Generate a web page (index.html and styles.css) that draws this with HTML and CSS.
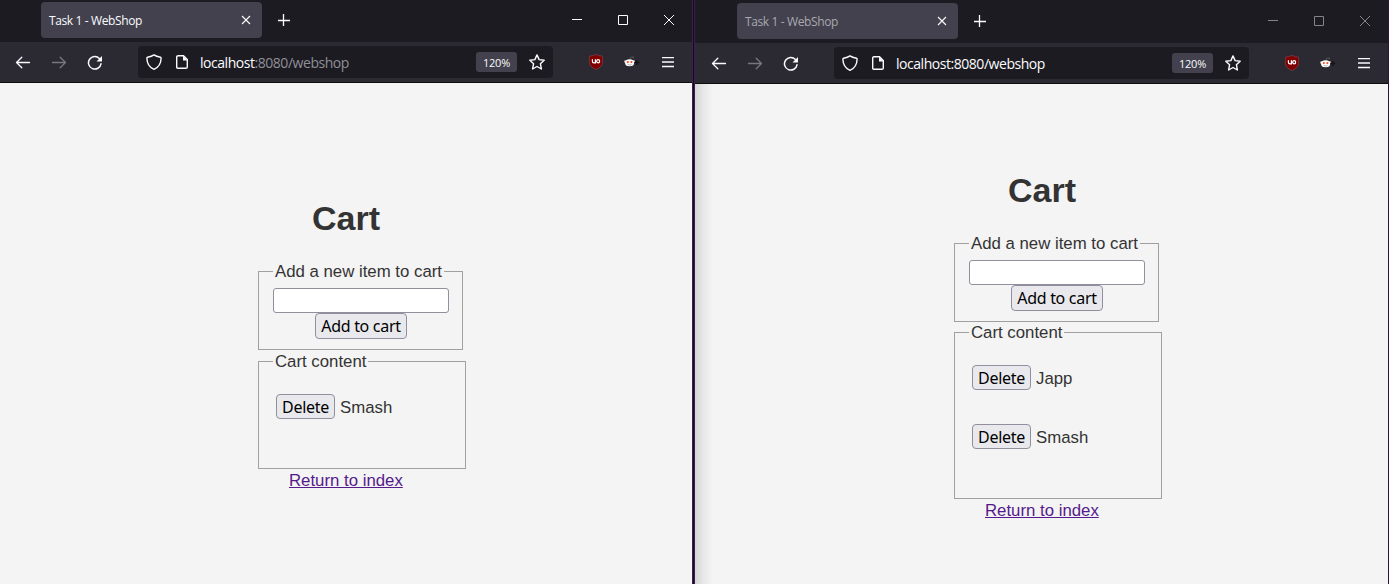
FILE: index.html
```html
<!DOCTYPE html>
<html lang="en">
<head>
<meta charset="utf-8">
<title>Task 1 - WebShop</title>
<link rel="stylesheet" href="styles.css">
</head>
<body>
<svg width="0" height="0" class="defs">
  <defs>
    <symbol id="close" viewBox="0 0 10 10"><path d="M1 1l8 8M9 1l-8 8" fill="none" stroke="currentColor" stroke-width="1.1"/></symbol>
    <symbol id="plus" viewBox="0 0 12 12"><path d="M5.500 0v12M0 6.500h12" fill="none" stroke="currentColor" stroke-width="1.300"/></symbol>
    <symbol id="min" viewBox="0 0 10 10"><path d="M0 4.5h10" stroke="currentColor"/></symbol>
    <symbol id="max" viewBox="0 0 10 10"><path d="M.5.5h9v9h-9z" fill="none" stroke="currentColor"/></symbol>
    <symbol id="exit" viewBox="0 0 10 10"><path d="M0 0l10 10M10 0L0 10" stroke="currentColor"/></symbol>
    <symbol id="back" viewBox="0 0 16 16"><path d="M14.500 8.500H1.500M6.800 3.200L1.500 8.500l5.300 5.300" fill="none" stroke="currentColor" stroke-width="1.300" stroke-linecap="round" stroke-linejoin="round"/></symbol>
    <symbol id="forward" viewBox="0 0 16 16"><path d="M1.500 8.500h13M9.200 3.200l5.300 5.300-5.300 5.300" fill="none" stroke="currentColor" stroke-width="1.300" stroke-linecap="round" stroke-linejoin="round"/></symbol>
    <symbol id="reload" viewBox="0 0 16 16"><path d="M12.4 4.500A6.300 6.300 0 1 0 14 9.800" fill="none" stroke="currentColor" stroke-width="1.500" stroke-linecap="round"/><path d="M15 2v4.900q0 .6-.6.6H9.500z" fill="currentColor"/></symbol>
    <symbol id="shield" viewBox="0 0 16 16"><path d="M8 .9C6.200 2.200 3.800 2.900 1.600 3.300 1.100 3.400.9 3.800.9 4.200 1 9 3.400 13.300 8 15.300c4.600-2 7-6.300 7.100-11.100 0-.4-.2-.8-.7-.9C12.200 2.900 9.800 2.200 8 .9z" fill="none" stroke="currentColor" stroke-width="1.4" stroke-linejoin="round"/></symbol>
    <symbol id="page" viewBox="0 0 12 14"><path d="M2.200.7h5.300l3.800 3.900v7.300q0 1.400-1.400 1.400H2.200Q.7 13.300.7 11.900V2.100Q.7.7 2.200.7z" fill="none" stroke="currentColor" stroke-width="1.400"/><path d="M7 .6v4.800h4.500z" fill="currentColor"/></symbol>
    <symbol id="star" viewBox="0 0 16 16"><path d="M8 .9l2.100 4.700 5.100.6-3.800 3.500 1 5.300L8 12.500 3.600 15l1-5.300L.8 6.200l5.100-.6z" fill="none" stroke="currentColor" stroke-width="1.400" stroke-linejoin="round"/></symbol>
    <symbol id="blocker" viewBox="0 0 14 16"><path d="M7 .4q3 1.700 6.600 1.700v6.500Q13.400 12.600 7 15.600.6 12.600.4 8.600V2.100Q4 2.100 7 .4z" fill="#800000" stroke="#85404a" stroke-width=".7"/><path d="M3.400 5.200v2.100q0 1.600 1.500 1.600h1.500V5.200" fill="none" stroke="#fff" stroke-width="1.200"/><rect x="7.700" y="5.600" width="2.900" height="3.200" rx="1.400" fill="none" stroke="#fff" stroke-width="1.200"/></symbol>
    <symbol id="alien" viewBox="0 0 16 12"><path d="M6 3l.7-2 2.400.4" fill="none" stroke="#555" stroke-width=".8"/><circle cx="9.200" cy="1.300" r=".9" fill="#555"/><circle cx="1.500" cy="5.600" r="1.300" fill="#ddd"/><circle cx="9.700" cy="5.600" r="1.300" fill="#ddd"/><ellipse cx="5.600" cy="6.700" rx="4.600" ry="3.500" fill="#fff"/><circle cx="3.800" cy="6.100" r="1.100" fill="#f35325"/><circle cx="7.400" cy="6.100" r="1.100" fill="#f35325"/><path d="M3.700 8.500q1.900 1 3.800 0" fill="none" stroke="#777" stroke-width=".6"/><path d="M12.700 4v5M10.200 6.500h5" stroke="#131217" stroke-width="1.600"/></symbol>
    <symbol id="menu" viewBox="0 0 12 11"><path d="M0 .5h12M0 5h12M0 9.500h12" stroke="currentColor" stroke-width="1.300"/></symbol>
  </defs>
</svg>
<div class="desktop">
  <section class="window active">
    <div class="tabs">
      <div class="tab"><span>Task 1 - WebShop</span><svg class="i10"><use href="#close"/></svg></div>
      <svg class="new-tab"><use href="#plus"/></svg>
      <div class="controls"><svg class="i10"><use href="#min"/></svg><svg class="i10"><use href="#max"/></svg><svg class="i10"><use href="#exit"/></svg></div>
    </div>
    <div class="toolbar">
      <div class="nav"><svg class="i16"><use href="#back"/></svg><svg class="i16 dim"><use href="#forward"/></svg><svg class="i16"><use href="#reload"/></svg></div>
      <div class="urlbar"><svg class="i16"><use href="#shield"/></svg><svg class="page-icon"><use href="#page"/></svg><span class="url">localhost<span class="path">:8080/webshop</span></span><span class="zoom">120%</span><svg class="i16"><use href="#star"/></svg></div>
      <div class="tools"><svg class="blocker"><use href="#blocker"/></svg><svg class="alien"><use href="#alien"/></svg><svg class="menu"><use href="#menu"/></svg></div>
    </div>
    <main class="content">
      <h1>Cart</h1>
      <fieldset class="add"><legend>Add a new item to cart</legend><input type="text"><button class="submit">Add to cart</button></fieldset>
      <fieldset class="cart"><legend>Cart content</legend>
        <div class="item"><button>Delete</button><span>Smash</span></div>
      </fieldset>
      <a href="#">Return to index</a>
    </main>
  </section>
  <section class="window inactive">
    <div class="tabs">
      <div class="tab"><span>Task 1 - WebShop</span><svg class="i10"><use href="#close"/></svg></div>
      <svg class="new-tab"><use href="#plus"/></svg>
      <div class="controls"><svg class="i10"><use href="#min"/></svg><svg class="i10"><use href="#max"/></svg><svg class="i10"><use href="#exit"/></svg></div>
    </div>
    <div class="toolbar">
      <div class="nav"><svg class="i16"><use href="#back"/></svg><svg class="i16 dim"><use href="#forward"/></svg><svg class="i16"><use href="#reload"/></svg></div>
      <div class="urlbar"><svg class="i16"><use href="#shield"/></svg><svg class="page-icon"><use href="#page"/></svg><span class="url">localhost<span class="path">:8080/webshop</span></span><span class="zoom">120%</span><svg class="i16"><use href="#star"/></svg></div>
      <div class="tools"><svg class="blocker"><use href="#blocker"/></svg><svg class="alien"><use href="#alien"/></svg><svg class="menu"><use href="#menu"/></svg></div>
    </div>
    <main class="content">
      <h1>Cart</h1>
      <fieldset class="add"><legend>Add a new item to cart</legend><input type="text"><button class="submit">Add to cart</button></fieldset>
      <fieldset class="cart"><legend>Cart content</legend>
        <div class="item"><button>Delete</button><span>Japp</span></div>
        <div class="item"><button>Delete</button><span>Smash</span></div>
      </fieldset>
      <a href="#">Return to index</a>
    </main>
  </section>
</div>
</body>
</html>
```
FILE: styles.css
```css
* { box-sizing: border-box; }
body { margin: 0; overflow: hidden; font-family: "Liberation Sans", Arial, sans-serif; }
.defs { position: absolute; }
svg { display: block; flex: none; }
.i10 { width: 10px; height: 10px; }
.i16 { width: 16px; height: 16px; }

.desktop { display: grid; grid-template-columns: 692px 694px; column-gap: 3px; width: 1389px; height: 584px; background: linear-gradient(90deg, #4b2b5a 0 692px, #3a2350 692px 693px, #1c0525 693px 694px, #37204b 694px 695px, #2c1440 695px); }
.window { display: flex; flex-direction: column; overflow: hidden; background: #f4f4f4; color: #fbfbfe; }
.inactive { width: 693px; }

.tabs { display: flex; align-items: flex-start; height: 42px; padding: 2px 18px 0 41px; background: #1c1b22; font-family: "Open Sans", sans-serif; font-size: 12px; }
.tab { display: flex; align-items: center; justify-content: space-between; width: 221px; height: 36px; padding: 0 11px 0 8px; border-radius: 4px; background: #42414d; letter-spacing: -.38px; }
.tab span { padding-top: 1px; }
.new-tab { width: 12px; height: 12px; margin: 12px 0 0 16px; }
.controls { display: flex; gap: 36px; margin: 13px 0 0 auto; }

.toolbar { display: flex; align-items: center; height: 41px; padding-left: 15px; border-bottom: 1px solid #0c0c0d; background: #2b2a33; }
.nav { display: flex; gap: 20px; width: 123px; }
.dim { color: #77767e; }
.urlbar { display: flex; align-items: center; width: 415px; height: 32px; padding: 0 8px; border-radius: 4px; background: #1c1b22; font-family: "Open Sans", sans-serif; }
.page-icon { width: 12px; height: 14px; margin: 0 12px 0 14px; }
.url { flex: 1; padding-top: 1px; font-size: 14px; letter-spacing: -.46px; }
.path { color: #8f8f96; }
.zoom { width: 41px; height: 20px; margin-right: 12px; border-radius: 3px; background: #42414d; font-size: 11px; line-height: 22px; letter-spacing: -.2px; text-align: center; }
.tools { display: flex; align-items: center; margin-left: 36px; }
.blocker { width: 14px; height: 16px; }
.alien { width: 16px; height: 12px; margin: 0 22px 0 21px; }
.menu { width: 12px; height: 11px; }

.inactive .tabs { height: 43px; padding: 3px 18px 0 42px; }
.inactive .tab span { color: #a9a8b0; }
.inactive .controls { color: #85848a; }
.inactive .toolbar { padding-left: 16px; }
.inactive .path { color: inherit; }
.inactive .content { padding-top: 87px; padding-left: 259px; background: linear-gradient(90deg, #d5d5d5, #e7e7e7 8px, #f4f4f4 18px); }

.content { flex: 1; padding: 116px 0 0 258px; color: #333; font-size: 16.8px; }
h1 { width: 176px; height: 38px; margin: 0 0 24px; font-size: 34px; line-height: 38px; text-align: center; }
fieldset { margin: 0; padding: 0 13px 0 14px; border: 1px solid #a0a0a0; }
legend { height: 20px; padding: 0 2px; line-height: 22px; white-space: nowrap; }
.add { width: 205px; height: 89px; padding-top: 7px; }
input { display: block; width: 176px; height: 25px; padding: 0; border: 1px solid #8f8f9d; border-radius: 3px; background: #fff; }
button { display: block; width: 59px; height: 25px; padding: 0; border: 1px solid #8f8f9d; border-radius: 4px; background: #e9e9ed; color: #000; font: 16px/24px "Noto Sans", sans-serif; letter-spacing: -.3px; white-space: nowrap; }
.submit { width: 92px; height: 26px; margin-left: 42px; }
.cart { width: 208px; height: 118px; margin-top: 1px; padding-top: 23px; }
.item { display: flex; align-items: center; gap: 5px; height: 25px; margin: 0 0 34px 3px; }
.item span { padding-top: 2px; }
.inactive .cart { height: 177px; margin-top: 0; }
.content a { display: block; width: max-content; margin: 1px 0 0 31px; color: #551a8b; line-height: 22px; }
```
